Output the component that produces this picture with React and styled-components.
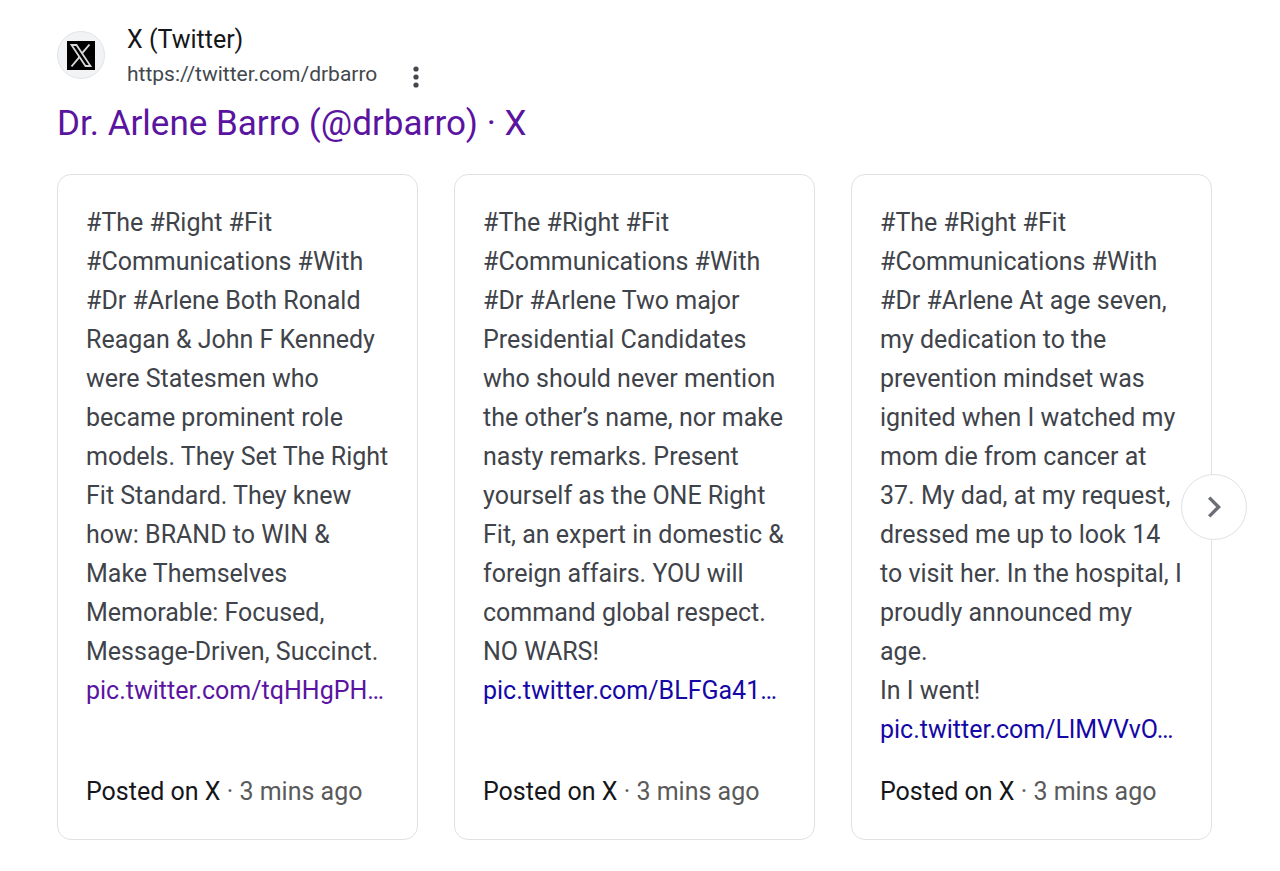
import React from 'react'
import styled, { createGlobalStyle } from 'styled-components'

const posts = [
  {
    id: 1,
    text: '#The #Right #Fit #Communications #With #Dr #Arlene Both Ronald Reagan & John F Kennedy were Statesmen who became prominent role models. They Set The Right Fit Standard. They knew how: BRAND to WIN & Make Themselves Memorable: Focused, Message-Driven, Succinct.',
    link: 'pic.twitter.com/tqHHgPH…',
    visited: true,
    time: '3 mins ago',
  },
  {
    id: 2,
    text: '#The #Right #Fit #Communications #With #Dr #Arlene Two major Presidential Candidates who should never mention the other’s name, nor make nasty remarks. Present yourself as the ONE Right Fit, an expert in domestic & foreign affairs. YOU will command global respect. NO WARS!',
    link: 'pic.twitter.com/BLFGa41…',
    time: '3 mins ago',
  },
  {
    id: 3,
    text: '#The #Right #Fit #Communications #With #Dr #Arlene At age seven, my dedication to the prevention mindset was ignited when I watched my mom die from cancer at 37. My dad, at my request, dressed me up to look 14 to visit her. In the hospital, I proudly announced my age.\nIn I went!',
    link: 'pic.twitter.com/LlMVVvO…',
    time: '3 mins ago',
  },
]

function App() {
  return (
    <>
      <GlobalStyle />
      <Result>
        <Source>
          <Favicon>
            <XLogo />
          </Favicon>
          <SourceText>
            <SiteName>X (Twitter)</SiteName>
            <UrlRow>
              <cite>https://twitter.com/drbarro</cite>
              <MenuButton aria-label='About this result'>
                <svg width='8' height='24' viewBox='0 0 8 24' fill='currentColor'>
                  <circle cx='4' cy='4' r='2.6' />
                  <circle cx='4' cy='12' r='2.6' />
                  <circle cx='4' cy='20' r='2.6' />
                </svg>
              </MenuButton>
            </UrlRow>
          </SourceText>
        </Source>
        <Title>
          <a href='#profile'>Dr. Arlene Barro (@drbarro) · X</a>
        </Title>
        <Carousel>
          {posts.map((post) => (
            <Card key={post.id}>
              <PostText>{post.text}</PostText>
              <PostLink href='#post' $visited={post.visited}>{post.link}</PostLink>
              <Footer>
                Posted on X <span>· {post.time}</span>
              </Footer>
            </Card>
          ))}
          <NextButton aria-label='Next'>
            <svg width='16' height='24' viewBox='0 0 16 24' fill='none' stroke='currentColor' strokeWidth='3.4'>
              <path d='M3.2 2.6 L12.6 12 L3.2 21.4' />
            </svg>
          </NextButton>
        </Carousel>
      </Result>
    </>
  )
}

function XLogo() {
  return (
    <svg width='28' height='29' viewBox='0 0 28 29'>
      <rect width='28' height='29' fill='#000' />
      <path d='M4.5 4 H9.5 L23.5 25 H18.5 Z' fill='none' stroke='#d8d8d8' strokeWidth='1.8' />
      <path d='M22.5 3.5 L15.2 12.2 M12.6 15.8 L4.5 25.5' stroke='#d8d8d8' strokeWidth='1.9' />
    </svg>
  )
}

export default App

const GlobalStyle = createGlobalStyle`
  *{
    box-sizing: border-box;
  }
  body{
    margin: 0;
    background: #fff;
    font-family: Roboto, Arial, sans-serif;
  }
`

const Result = styled.main`
  padding: 20px 68px 32px 57px;
`

const Source = styled.div`
  display: flex;
  align-items: center;
  gap: 22px;
`

const Favicon = styled.div`
  display: flex;
  align-items: center;
  justify-content: center;
  width: 48px;
  height: 48px;
  border-radius: 50%;
  border: 1px solid #e2e4e8;
  background: #f1f3f4;
`

const SourceText = styled.div`
  color: #151619;
`

const SiteName = styled.div`
  font-size: 25px;
  line-height: 39px;
`

const UrlRow = styled.div`
  display: flex;
  align-items: center;
  gap: 35px;
  font-size: 21px;
  line-height: 31px;
  color: #43474d;

  cite{
    font-style: normal;
  }
`

const MenuButton = styled.button`
  display: flex;
  padding: 4px 0 0;
  border: none;
  background: none;
  color: #43474d;
  cursor: pointer;
`

const Title = styled.h3`
  margin: 10px 0 26px;
  font-size: 35px;
  font-weight: 400;
  line-height: 48px;

  a{
    color: #5a14a0;
    text-decoration: none;
  }
`

const Carousel = styled.div`
  position: relative;
  display: grid;
  grid-template-columns: repeat(3, 1fr);
  gap: 36px;
`

const Card = styled.article`
  display: flex;
  flex-direction: column;
  min-width: 0;
  padding: 28px;
  border: 1px solid #dfe1e5;
  border-radius: 14px;
  font-size: 25px;
  line-height: 39px;
`

const PostText = styled.p`
  margin: 0;
  color: #3f434a;
  white-space: pre-line;
`

const PostLink = styled.a`
  color: ${(props) => (props.$visited ? '#5a14a0' : '#1508a6')};
  text-decoration: none;
  white-space: nowrap;
`

const Footer = styled.div`
  margin-top: auto;
  padding-top: 23px;
  color: #151619;

  span{
    color: #5a5a5a;
  }
`

/* sits over the right edge of the last card */
const NextButton = styled.button`
  position: absolute;
  top: 50%;
  right: -35px;
  display: flex;
  align-items: center;
  justify-content: center;
  width: 66px;
  height: 66px;
  padding: 0;
  border: 1px solid #dfe1e5;
  border-radius: 50%;
  background: #fff;
  color: #6b6e74;
  transform: translateY(-50%);
  cursor: pointer;
`
